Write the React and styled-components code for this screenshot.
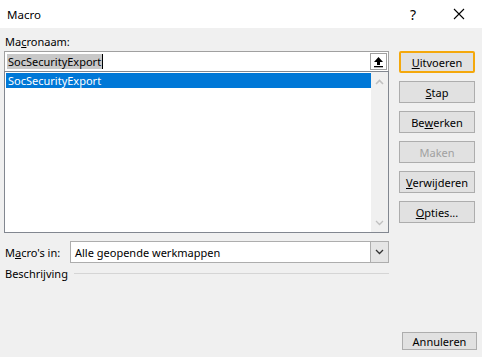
import React from "react";
import styled, { createGlobalStyle } from "styled-components";

const Global = createGlobalStyle`
  html, body { margin: 0; padding: 0; background: #f0f0f0; }
  body { font-family: "Noto Sans", "Open Sans", sans-serif; font-size: 11px; color: #000; }
`;

const Window = styled.div`
  width: 482px;
  height: 357px;
  background: #f0f0f0;
  display: flex;
  flex-direction: column;
  overflow: hidden;
`;

const TitleBar = styled.div`
  height: 28px;
  background: #fff;
  display: flex;
  align-items: center;
  padding-left: 7px;
  font-size: 11.5px;
`;

const Title = styled.div`
  flex: 1;
`;

const TitleButton = styled.div`
  width: 46px;
  height: 28px;
  display: flex;
  align-items: center;
  justify-content: center;
  font-size: 14px;
  color: #000;
`;

const Body = styled.div`
  flex: 1;
  display: grid;
  grid-template-columns: 385px 76px;
  column-gap: 10px;
  padding: 0 0 0 4px;
`;

const LeftCol = styled.div`
  display: flex;
  flex-direction: column;
`;

const Label = styled.div`
  height: 16px;
  line-height: 16px;
  padding: 6px 0 1px 1px;
`;

const U = styled.span`
  text-decoration: underline;
  text-underline-offset: 1px;
`;

const InputRow = styled.div`
  height: 19px;
  border: 1px solid #a0a0a0;
  border-bottom: none;
  background: #fff;
  display: flex;
  align-items: center;
`;

const InputText = styled.div`
  flex: 1;
  padding-left: 2px;
  display: flex;
  align-items: center;
`;

const Selected = styled.span`
  background: #c8c8c8;
  line-height: 15px;
  padding: 0 1px;
`;

const Caret = styled.span`
  width: 1px;
  height: 15px;
  background: #000;
`;

const ArrowBtn = styled.div`
  width: 17px;
  height: 17px;
  margin-right: 1px;
  border: 1px solid #a0a0a0;
  box-sizing: border-box;
  background: #fff;
  display: flex;
  align-items: center;
  justify-content: center;
`;

const List = styled.div`
  height: 160px;
  border: 1px solid #828790;
  background: #fff;
  display: flex;
`;

const ListItems = styled.div`
  flex: 1;
  padding: 1px 0 0 1px;
`;

const ListItem = styled.div`
  height: 15px;
  line-height: 15px;
  padding-left: 2px;
  background: ${(p) => (p.$selected ? "#0078d7" : "transparent")};
  color: ${(p) => (p.$selected ? "#fff" : "#000")};
`;

const Scrollbar = styled.div`
  width: 17px;
  background: #f0f0f0;
  display: flex;
  flex-direction: column;
  justify-content: space-between;
  align-items: center;
  padding: 7px 0 6px;
`;

const SelectRow = styled.div`
  margin-top: 8px;
  display: flex;
  align-items: center;
`;

const SelectLabel = styled.div`
  width: 65px;
  padding-left: 1px;
`;

const Select = styled.div`
  flex: 1;
  height: 20px;
  border: 1px solid #adadad;
  background: #fff;
  display: flex;
  align-items: center;
`;

const SelectText = styled.div`
  flex: 1;
  padding-left: 4px;
`;

const SelectBtn = styled.div`
  width: 17px;
  height: 20px;
  background: #e5e5e5;
  border-left: 1px solid #adadad;
  display: flex;
  align-items: center;
  justify-content: center;
`;

const Section = styled.div`
  margin-top: 3px;
  display: flex;
  align-items: center;
  gap: 6px;
  padding-left: 1px;
`;

const Rule = styled.div`
  flex: 1;
  height: 1px;
  background: #d5d5d5;
`;

const RightCol = styled.div`
  display: flex;
  flex-direction: column;
  gap: 8px;
  padding-top: 23px;
`;

const Button = styled.div`
  height: 22px;
  box-sizing: border-box;
  border: ${(p) => (p.$default ? "2px solid #f4a80c" : "1px solid #adadad")};
  border-radius: ${(p) => (p.$default ? "2px" : "0")};
  background: #e1e1e1;
  display: flex;
  align-items: center;
  justify-content: center;
  color: ${(p) => (p.$disabled ? "#a0a0a0" : "#000")};
  box-shadow: ${(p) => (p.$default ? "inset 0 0 0 1px #e1e1e1" : "none")};
`;

const Footer = styled.div`
  display: flex;
  justify-content: flex-end;
  padding: 0 5px 7px 0;
`;

const FooterButton = styled(Button)`
  width: 75px;
  height: 18px;
`;

const ChevronUp = () => (
  <svg width="9" height="6" viewBox="0 0 9 6">
    <path d="M1 5 L4.5 1.5 L8 5" fill="none" stroke="#c0c0c0" strokeWidth="1.6" />
  </svg>
);
const ChevronDown = ({ color = "#c0c0c0" }) => (
  <svg width="9" height="6" viewBox="0 0 9 6">
    <path d="M1 1 L4.5 4.5 L8 1" fill="none" stroke={color} strokeWidth="1.3" />
  </svg>
);

export default function App() {
  return (
    <>
      <Global />
      <Window>
        <TitleBar>
          <Title>Macro</Title>
          <TitleButton>?</TitleButton>
          <TitleButton>
            <svg width="12" height="12" viewBox="0 0 12 12">
              <path d="M1 1 L11 11 M11 1 L1 11" stroke="#000" strokeWidth="1.1" />
            </svg>
          </TitleButton>
        </TitleBar>
        <Body>
          <LeftCol>
            <Label>
              Ma<U>c</U>ronaam:
            </Label>
            <InputRow>
              <InputText>
                <Selected>SocSecurityExport</Selected>
                <Caret />
              </InputText>
              <ArrowBtn>
                <svg width="11" height="12" viewBox="0 0 11 12">
                  <path d="M5.5 1 L10 6 H7 V9 H4 V6 H1 Z" fill="#000" />
                  <rect x="1" y="10" width="9" height="1.3" fill="#000" />
                </svg>
              </ArrowBtn>
            </InputRow>
            <List>
              <ListItems>
                <ListItem $selected>SocSecurityExport</ListItem>
              </ListItems>
              <Scrollbar>
                <ChevronUp />
                <ChevronDown />
              </Scrollbar>
            </List>
            <SelectRow>
              <SelectLabel>
                M<U>a</U>cro's in:
              </SelectLabel>
              <Select>
                <SelectText>Alle geopende werkmappen</SelectText>
                <SelectBtn>
                  <ChevronDown color="#333" />
                </SelectBtn>
              </Select>
            </SelectRow>
            <Section>
              <span>Beschrijving</span>
              <Rule />
            </Section>
          </LeftCol>
          <RightCol>
            <Button $default>
              <U>U</U>itvoeren
            </Button>
            <Button>
              <U>S</U>tap
            </Button>
            <Button>
              Be<U>w</U>erken
            </Button>
            <Button $disabled>Maken</Button>
            <Button>
              <U>V</U>erwijderen
            </Button>
            <Button>
              <U>O</U>pties...
            </Button>
          </RightCol>
        </Body>
        <Footer>
          <FooterButton>Annuleren</FooterButton>
        </Footer>
      </Window>
    </>
  );
}
